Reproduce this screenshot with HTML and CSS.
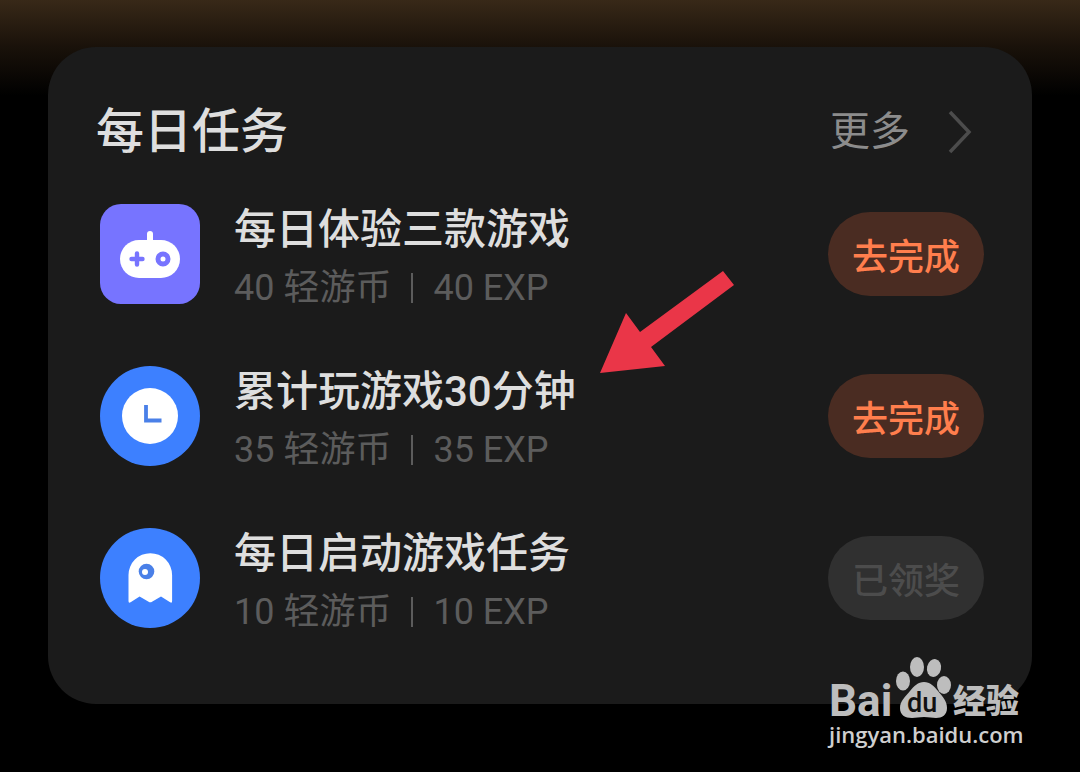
FILE: index.html
```html
<!DOCTYPE html>
<html lang="zh-CN">
<head>
    <meta charset="UTF-8">
    <meta name="viewport" content="width=device-width, initial-scale=1.0">
    <title>每日任务</title>
    <link rel="stylesheet" href="styles.css">
</head>
<body>
    <main class="card">
        <header class="card-header">
            <h1 class="card-title">每日任务</h1>
            <a href="#" class="more">
                更多
                <svg class="chevron" viewBox="0 0 24 44" aria-hidden="true">
                    <path d="M2 2 L21 22 L2 42" fill="none" stroke="currentColor" stroke-width="3.500"/>
                </svg>
            </a>
        </header>

        <ul class="task-list">
            <li class="task">
                <svg class="task-icon" viewBox="0 0 100 100" aria-hidden="true">
                    <rect width="100" height="100" rx="21" fill="#7774ff"/>
                    <rect x="47" y="27" width="6" height="16" rx="3" fill="#fff"/>
                    <rect x="20" y="36" width="60" height="38" rx="19" fill="#fff"/>
                    <path d="M37 49.5v11M31.5 55h11" stroke="#7774ff" stroke-width="4.4" stroke-linecap="round"/>
                    <circle cx="63" cy="55" r="5" fill="none" stroke="#7774ff" stroke-width="5"/>
                </svg>
                <div class="task-info">
                    <h2 class="task-name">每日体验三款游戏</h2>
                    <p class="task-reward"><span>40 轻游币</span><span class="divider"></span><span>40 EXP</span></p>
                </div>
                <button type="button" class="btn">去完成</button>
            </li>

            <li class="task">
                <svg class="task-icon" viewBox="0 0 100 100" aria-hidden="true">
                    <circle cx="50" cy="50" r="50" fill="#3d80ff"/>
                    <circle cx="50" cy="50" r="28" fill="#fff"/>
                    <path d="M46 39v15.500h15.500" fill="none" stroke="#4a80e8" stroke-width="3.800"/>
                </svg>
                <div class="task-info">
                    <h2 class="task-name">累计玩游戏30分钟</h2>
                    <p class="task-reward"><span>35 轻游币</span><span class="divider"></span><span>35 EXP</span></p>
                </div>
                <button type="button" class="btn">去完成</button>
            </li>

            <li class="task">
                <svg class="task-icon" viewBox="0 0 100 100" aria-hidden="true">
                    <circle cx="50" cy="50" r="50" fill="#3d80ff"/>
                    <path d="M28.500 73V47a21.800 21.800 0 0 1 43.600 0v26q0 2.500-2 1.200L61 68.500l-9 5.300q-1.700 1-3.400 0l-9-5.300-9 5.700q-2.100 1.300-2.100-1.200z" fill="#fff"/>
                    <circle cx="46.500" cy="43.500" r="7.800" fill="#4a80e8"/>
                    <circle cx="45" cy="44" r="3" fill="#fff"/>
                </svg>
                <div class="task-info">
                    <h2 class="task-name">每日启动游戏任务</h2>
                    <p class="task-reward"><span>10 轻游币</span><span class="divider"></span><span>10 EXP</span></p>
                </div>
                <button type="button" class="btn" disabled>已领奖</button>
            </li>
        </ul>

        <svg class="arrow" viewBox="0 0 134 103" aria-hidden="true">
            <polygon points="0,102 26,42 40,61 123,0 134,14 51,76 65,95" fill="#ea3648"/>
        </svg>
    </main>

    <div class="watermark">
        <svg class="watermark-logo" viewBox="0 0 192 64" role="img" aria-label="Baidu 经验">
            <text x="0" y="60" class="logo-bai">Bai</text>
            <g fill="#bdbdbd">
                <ellipse cx="74" cy="25" rx="7" ry="9.500"/>
                <ellipse cx="88" cy="11" rx="7" ry="10"/>
                <ellipse cx="105" cy="12" rx="7" ry="9" transform="rotate(12 105 12)"/>
                <ellipse cx="115" cy="29" rx="7" ry="9"/>
                <path d="M95 26c6 0 10 4 14 9 5 6 9 10 9 17 0 7-5 10-11 10-4 0-7-1-12-1s-8 1-12 1c-7 0-12-3-12-10 0-7 5-11 10-17 4-5 8-9 14-9z"/>
            </g>
            <text x="78" y="56" class="logo-du">du</text>
            <text x="124" y="57" class="logo-cn">经验</text>
        </svg>
        <span class="watermark-url">jingyan.baidu.com</span>
    </div>
</body>
</html>
```
FILE: styles.css
```css
:root {
    --card-bg: #1b1b1b;
    --text-color: #dedede;
    --muted-color: #5c5c5c;
    --accent-color: #ff7e4d;
    --accent-bg: #4a2c22;
}

* {
    margin: 0;
    padding: 0;
    box-sizing: border-box;
}

body {
    position: relative;
    min-height: 100vh;
    padding: 47px 48px 68px;
    background: #000 linear-gradient(#382918, #1a120a 46px, #000 96px) no-repeat;
    color: var(--text-color);
    font-family: Roboto, "Noto Sans CJK SC", sans-serif;
}

.card {
    position: relative;
    padding: 48px 48px 76px 52px;
    background-color: var(--card-bg);
    border-radius: 48px;
}

.card-header {
    display: flex;
    justify-content: space-between;
    align-items: center;
    height: 74px;
    margin-bottom: 35px;
    padding-right: 12px;
}

.card-title {
    margin-left: -4px;
    font-size: 48px;
    font-weight: 500;
    line-height: 72px;
}

.more {
    display: flex;
    align-items: center;
    gap: 38px;
    color: #8c8c8c;
    font-size: 40px;
    line-height: 72px;
    text-decoration: none;
}

.chevron {
    width: 24px;
    height: 44px;
    color: #4c4c4c;
}

.task-list {
    display: flex;
    flex-direction: column;
    gap: 62px;
    list-style: none;
}

.task {
    display: flex;
    align-items: center;
    height: 100px;
}

.task-icon {
    flex: none;
    width: 100px;
    height: 100px;
    margin-right: 34px;
}

.task-info {
    flex: 1;
    padding-top: 8px;
}

.task-name {
    font-size: 42px;
    font-weight: 500;
    line-height: 60px;
}

.task-reward {
    display: flex;
    align-items: center;
    gap: 20px;
    color: var(--muted-color);
    font-size: 36px;
    line-height: 56px;
}

.divider {
    width: 2px;
    height: 30px;
    background-color: var(--muted-color);
}

.btn {
    width: 156px;
    height: 84px;
    border: none;
    border-radius: 42px;
    background-color: var(--accent-bg);
    color: var(--accent-color);
    font-family: inherit;
    font-size: 36px;
    font-weight: 500;
    cursor: pointer;
}

.btn:disabled {
    background-color: #303030;
    color: #4c4c4c;
    cursor: default;
}

.arrow {
    position: absolute;
    top: 224px;
    left: 552px;
    width: 134px;
    height: 103px;
}

.watermark {
    position: absolute;
    right: 59px;
    bottom: 24px;
    width: 192px;
}

.watermark-logo {
    display: block;
    width: 192px;
    height: 64px;
}

.logo-bai {
    fill: #bdbdbd;
    font-size: 44px;
    font-weight: 700;
}

.logo-du {
    fill: #111;
    font-size: 27px;
    font-weight: 500;
}

.logo-cn {
    fill: #bdbdbd;
    font-size: 33px;
    font-weight: 900;
}

.watermark-url {
    display: block;
    color: #cfcfcf;
    font-family: "Open Sans", sans-serif;
    font-size: 22px;
    font-weight: 600;
    line-height: 28px;
    white-space: nowrap;
}
```
